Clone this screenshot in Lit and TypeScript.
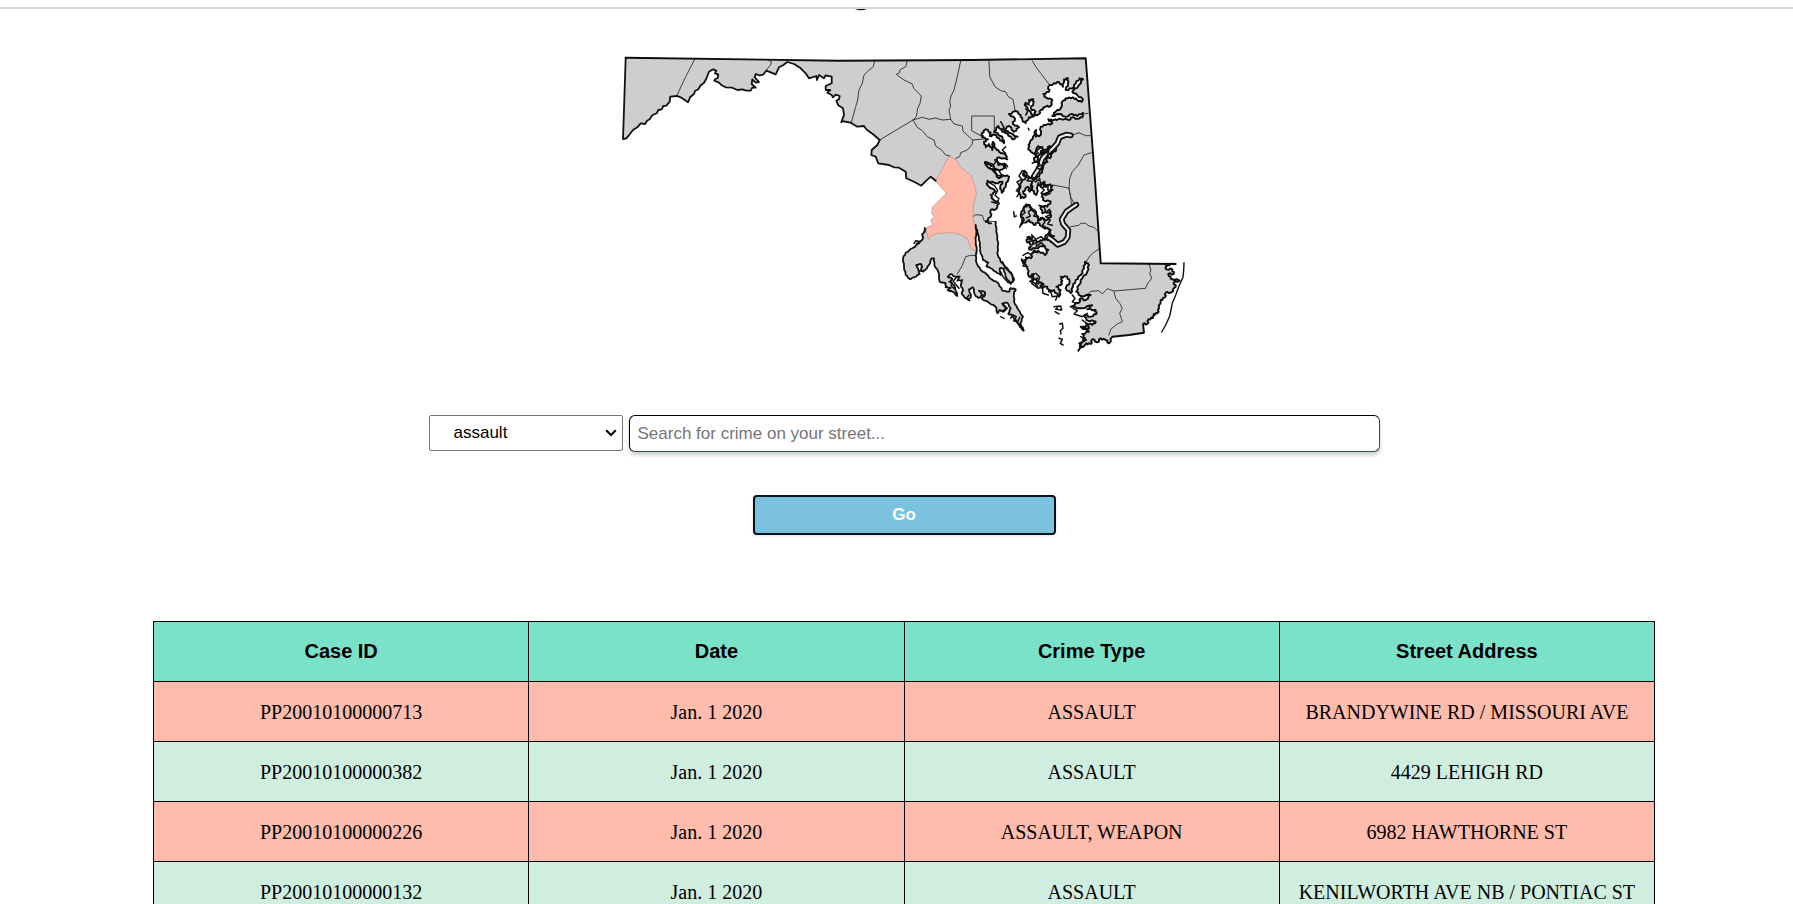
import { LitElement, html, css, svg } from "lit";
import { customElement, property, state } from "lit/decorators.js";

type Point = [number, number];

interface Incident {
  id: string;
  date: string;
  type: string;
  address: string;
}

// Map geometry is surveyed in sheets. Each sheet has its own origin and is
// digitised at three units to one map unit.
const sheet = (ox: number, oy: number) => (points: string): Point[] =>
  points.trim().split(/\s+/).map((pair) => {
    const [x, y] = pair.split(",").map(Number);
    return [ox + x / 3, oy + y / 3];
  });

const west = sheet(610, 40);
const north = sheet(840, 40);
const capital = sheet(860, 120);
const middle = sheet(980, 140);
const south = sheet(880, 200);
const shore = sheet(1000, 180);

const line = (points: Point[]) =>
  "M" + points.map(([x, y]) => `${x.toFixed(1)} ${y.toFixed(1)}`).join("L");

// Breaks short shoreline segments into small inlets; long survey lines stay straight.
const crinkle = (points: Point[], depth = 1.1): Point[] =>
  points.flatMap((p, i): Point[] => {
    const q = points[i + 1];
    if (!q) return [p];
    const dx = q[0] - p[0];
    const dy = q[1] - p[1];
    const length = Math.hypot(dx, dy);
    if (length < 3 || length > 14) return [p];
    const side = (i * 7) % 3 === 0 ? -depth : depth;
    const nx = (-dy / length) * side;
    const ny = (dx / length) * side;
    return [
      p,
      [p[0] + dx * 0.35 + nx, p[1] + dy * 0.35 + ny],
      [p[0] + dx * 0.6 - nx * 0.7, p[1] + dy * 0.6 - ny * 0.7],
    ];
  });

const potomac = [
  ...west(`50,53 42,297 52,295 62,283 72,270 85,262 95,250 108,252 114,242 122,238 130,226 143,220 148,210 158,208
    163,198 172,197 182,185 184,170 205,168 215,172 237,187 243,172 255,162 258,153 268,148 275,136 284,130 292,116
    300,95 312,88 322,92 318,100 328,104 326,114 318,118 316,122 330,128 338,136 350,142 370,143 385,150 400,148
    412,152 425,152 430,143 440,143 428,132 430,118 440,128 450,126 437,112 440,102 452,106 462,104 472,92 500,103
    510,82 522,76 535,66 555,72 575,85 590,100 600,115 622,108 624,120 630,105 645,115 650,106 668,110 668,130
    650,138 650,150 664,150 655,158 668,165 672,172 680,164 692,168 690,178 682,182 688,196 702,205 705,225 697,247`),
  ...north(`8,243 35,248 55,260 75,258 82,268 105,285 122,300 115,315 98,330 97,345 110,350 118,370 150,375 165,382
    180,383 200,395 202,415 225,425 247,437 262,422 275,410 290,422`),
];

const districtLine = capital(`230,183 262,220 220,262 218,280 226,290 215,300 222,315 203,322`);

const southernShore = crinkle(
  south(`137,84 138,95 130,102 132,115 120,130 100,145 80,158 72,175 75,200 80,225 92,237 105,232
  122,222 118,210 112,195 125,192 130,200 124,212 132,215 140,208 150,195 158,175 165,175 166,195 178,215 182,245
  200,250 200,262 215,264 206,270 222,276 235,288 228,262 215,245 220,236 206,230 215,222 228,230 242,230 235,242
  250,240 245,255 252,270 248,280 255,290 268,300 276,290 270,268 282,262 288,285 298,294 312,285 300,272 318,276
  318,285 308,296 330,308 350,320 355,340 362,330 372,335 380,325 370,310 384,308 395,325 388,342 400,345 405,355
  415,365 422,380 434,392 424,370 432,350 415,325 405,305 405,280 410,268 395,264 390,275 370,272 358,250 335,236
  322,222 305,210 293,190 290,165 293,155 290,120 292,100 290,75 296,100 303,130 303,150 312,180 328,188 322,198
  335,205 350,215 365,225 362,205 374,205 380,230 395,252 405,240 400,225 385,205 365,185 355,160 358,130 352,95
  350,65`),
  0.4,
);

const upperBay = crinkle(
  north(`456,550 440,545 455,530 455,510 470,508 480,490 462,478 455,465 470,455 445,435 445,422 470,430
  490,425 484,440 488,458 500,440 510,410 490,405 480,415 465,395 440,375 438,366 452,374 465,380 465,392 490,388
  500,375 485,372 468,360 480,352 505,358 500,345 480,335 470,325 462,305 460,330 450,312 440,322 435,305 447,298
  430,292 428,280 440,268 455,278 452,288 466,284 480,295 495,310 490,290 465,275 478,258 490,275 505,280 520,298
  536,290 510,278 495,268 510,258 525,275 540,262 522,252 528,236 510,222 530,213 545,225 550,240 560,250 570,232
  582,230 575,215 557,195 560,188 570,195 570,180 583,178 583,190 575,205 590,215 585,228 600,222 605,210 620,200
  635,198 640,180 620,172 613,162 630,155 628,140 645,130 660,126 672,140 675,118 687,115 687,130 680,150 700,145
  710,130 722,115 732,118 720,135 700,155 715,165 732,178 728,186 714,180 702,172 685,175 672,182 665,205 650,215
  640,228 660,222 680,230 700,222 715,228 732,218 730,232 715,236 700,232 690,240 660,236 640,242 628,238 640,250
  620,255 605,260 605,285 590,290 592,270 582,290 572,310 568,325 575,335`),
  0.7,
);

const easternShore = [
  ...crinkle(
    [
      ...north(`590,345 585,360 600,372 597,350 588,338 598,318 610,325 605,340 622,328 632,318 630,335 645,320 652,328
    640,340 632,355 620,350 625,365 612,372 610,390 600,410 585,418 570,410 556,392 552,402 560,412 548,425 540,450
    545,475 560,470 552,455 566,440 572,455 580,425 578,450 592,465 598,430 605,440 615,425 618,440 630,434 640,438
    635,455 622,458`),
      ...shore(`130,45 132,60 155,65 145,80 125,78 130,100 155,95 155,112 142,120 130,115 118,118 110,95 95,90 92,75
    75,80 65,105 75,120 65,135 90,120 105,135 115,128 130,140 155,150 150,165 165,168 155,185 140,175 130,182
    115,185 95,178 90,170 82,180 95,195 90,208 110,205 130,198 148,210 138,225 118,212 100,220 96,235 80,232 80,245
    68,238 85,265 90,290 105,282 100,300 115,295 112,310 128,308 125,322 145,320 150,335 165,330 180,350 185,330
    172,320 185,315 190,302 185,290 205,290 212,305 200,325 215,340 222,320 230,300 245,285 255,265 258,245 270,255
    265,275 250,295 240,315 232,335 245,348 275,345 260,360 245,355 240,368 215,380 245,385 280,376 265,388 290,390
    292,402 275,410 258,405 262,420 290,425 280,435 262,430 270,445 245,440 270,455 250,462 258,475 248,488 238,512
    262,490 275,492 280,478 295,487 305,475 320,480 330,490 340,470`),
    ],
    0.8,
  ),
  ...shore(`340,470 390,465 435,458`),
  ...crinkle(
    shore(`432,432 445,432 448,418 462,414 464,402 475,400 480,385 485,360 498,352 500,338 515,338 530,320 524,308
    542,302 515,296 508,282 524,282 520,268 502,268 500,254 530,252`),
    0.8,
  ),
  ...shore(`305,250 288,0`),
  ...north(`740,55 400,60 0,62`),
];

const land = [...potomac, ...districtLine, ...southernShore, ...upperBay, ...easternShore];

const princeGeorges = [
  ...capital(`230,183 270,108 293,120 300,138 335,165 350,205 352,225 343,255 342,290 346,310 350,320`),
  ...south(`292,100 290,120 293,155 275,145 265,115 245,105 220,98 175,100 155,108 148,118 140,84`),
  ...capital(`222,315 215,300 226,290 218,280 220,262 262,220`),
];

const countyLines = [
  west(`257,58 230,110 203,168`),
  west(`478,60 488,66 484,76 470,92`),
  north(`107,62 103,80 88,92 75,105 70,130 60,150 56,180 50,200 37,248`),
  north(`205,62 200,80 182,90 182,98 172,103 195,120 220,132 224,145 247,168 243,190 236,205 232,230 222,240 122,300`),
  north(`222,240 250,232 270,238 290,234 310,240 335,238`),
  north(`365,62 355,110 345,150 336,168 332,185 335,198 330,210 335,238 345,252 370,258 372,274 385,285 400,300 435,297`),
  north(`450,62 452,110 468,140 485,152 500,155 508,170 522,178 528,210`),
  north(`580,62 590,80 605,100 632,135`),
  north(`430,290 398,272 398,228 466,228 466,285`),
  north(`222,240 235,262 250,272 265,290 285,300 290,318 308,330 320,345 333,348`),
  north(`402,300 398,315 385,330 365,338 362,350 350,355`),
  north(`748,220 732,222`),
  north(`695,287 720,278 740,287 755,287`),
  north(`757,338 735,345 718,375 700,395 692,415 690,445 695,475 698,500`),
  north(`640,435 670,440 690,445`),
  capital(`342,290 350,284 370,286 375,302 410,305`),
  south(`235,222 248,200 260,170 275,166 290,167`),
  shore(`210,25 215,50 225,70`),
  shore(`215,140 240,136 245,130 260,130 270,138 285,142 300,157`),
  shore(`300,207 280,220 270,232 262,245`),
  shore(`450,253 456,270 452,280 458,295 445,312 440,325 345,333 325,326 310,342 300,332 275,334 268,342`),
  shore(`345,335 350,355 362,370 370,385 362,400 370,425 355,432 335,448 330,465`),
];

const rivers = [
  shore(`232,74 220,82 202,95 188,118 192,132 208,150 206,172 196,186 176,194 160,180 145,170`),
  north(`695,286 682,284 662,292 655,310 640,326 622,342 610,356 600,385 585,408`),
];

const islets = [
  north(`568,265 570,270`),
  north(`485,245 495,262 488,270`),
  north(`560,205 566,215 560,225`),
  north(`500,320 490,330 500,340`),
  north(`500,372 506,380`),
  north(`590,330 602,345 592,352`),
  south(`105,130 110,122 120,124 112,132`),
  south(`210,245 220,250 216,258 226,266`),
  south(`230,235 222,244 232,255 240,265`),
  south(`270,285 262,296 272,302`),
  south(`365,350 375,355`),
  south(`375,315 385,325 375,335`),
  south(`395,355 402,345 412,350 404,362 416,366 422,352`),
  south(`408,360 420,374 428,382`),
  middle(`175,30 190,20 196,34 184,44 200,40 210,30 204,50`),
  middle(`160,70 176,62 184,76 172,84 190,90 196,70 206,66`),
  middle(`130,92 120,108 128,118 114,126 122,140 112,152 122,158 114,170`),
  middle(`134,98 140,112 152,112 144,122 158,124`),
  middle(`160,118 170,126 182,116 184,130 198,126 192,142 208,134 206,150 222,150`),
  middle(`184,140 196,150 186,160 200,166 214,160`),
  middle(`142,192 132,206 138,218 126,228 130,242 122,262`),
  middle(`142,200 150,194 160,206 148,216 154,228 142,234`),
  middle(`164,208 172,216 164,228 178,232 176,244 188,238`),
  middle(`180,196 196,202 200,216 212,208 214,224 200,230 214,240 206,252 220,256`),
  middle(`190,232 198,246 190,256 204,264 214,272 206,282`),
  middle(`146,290 160,296 158,284 170,298 186,290 196,298 206,290`),
  middle(`150,304 164,302 160,314 174,306 172,320 186,308 198,318`),
  middle(`132,346 146,338 156,344 166,330 176,338`),
  middle(`128,360 138,368 132,378 146,380`),
  middle(`104,215 106,230 112,228`),
  middle(`160,402 164,418 152,424 168,430 176,440`),
  middle(`170,400 182,412 178,424 194,432 190,444`),
  middle(`28,68 44,74 54,60 58,76 76,70 82,86`),
  middle(`30,84 46,92 56,106 70,110 60,92 48,84`),
  middle(`30,128 46,136 56,152 48,166 60,176`),
  middle(`38,186 52,190 58,180`),
  shore(`92,290 104,300 98,310 118,325 130,320 132,340 148,345`),
  shore(`155,335 160,350 175,348 170,360`),
  shore(`165,380 185,378 188,390 170,388 176,382`),
  shore(`168,395 180,402`),
  shore(`182,432 190,430 192,445 184,452 186,462`),
  shore(`180,475 190,478 184,490 192,495`),
  shore(`220,345 228,355 220,365 232,370`),
  shore(`222,385 235,392 225,402 250,410 265,400`),
  shore(`250,420 265,432 255,445 268,450`),
  shore(`245,470 262,480 240,490 252,502`),
  shore(`10,245 20,265 40,285 42,305 28,308 12,290 5,275`),
];

const barrierIsland = shore(`555,248 554,270 552,292 540,318 530,345 520,370 512,408 500,435 488,456`);

@customElement("county-map")
class CountyMap extends LitElement {
  static styles = css`
    :host {
      display: block;
    }
    .map {
      display: block;
      width: 600px;
      max-width: 100%;
      height: auto;
      margin: 0 auto;
      stroke-linejoin: round;
      stroke-linecap: round;
    }
    .land {
      fill: #cecece;
    }
    .selected {
      fill: #ffb9a9;
      stroke: #a77a70;
      stroke-width: 0.5;
    }
    .county {
      fill: none;
      stroke: #3c3c3c;
      stroke-width: 1;
    }
    .coast {
      fill: none;
      stroke: #111;
      stroke-width: 1.8;
    }
    .tidal {
      fill: none;
      stroke: #0c0c0c;
      stroke-width: 1.9;
    }
    .islet {
      fill: none;
      stroke: #111;
      stroke-width: 1.5;
    }
    .bank {
      fill: none;
      stroke: #111;
      stroke-width: 5.8;
    }
    .water {
      fill: none;
      stroke: #ececec;
      stroke-width: 2.2;
    }
    .barrier {
      fill: none;
      stroke: #111;
      stroke-width: 1.4;
    }
  `;

  render() {
    return html`
      <svg class="map" viewBox="605 40 600 320" role="img" aria-label="Maryland counties">
        <path class="land" d=${line(land) + "Z"}></path>
        ${countyLines.map((c) => svg`<path class="county" d=${line(c)}></path>`)}
        <path class="selected" d=${line(princeGeorges) + "Z"}></path>
        <path class="coast" d=${line(potomac)}></path>
        <path class="coast" d=${line(southernShore)}></path>
        <path class="tidal" d=${line([...upperBay, ...easternShore, land[0]])}></path>
        ${rivers.map((r) => svg`<path class="bank" d=${line(r)}></path>`)}
        ${rivers.map((r) => svg`<path class="water" d=${line(r)}></path>`)}
        ${islets.map((i) => svg`<path class="islet" d=${line(i)}></path>`)}
        <path class="barrier" d=${line(barrierIsland)}></path>
      </svg>
    `;
  }
}

@customElement("crime-table")
class CrimeTable extends LitElement {
  @property({ attribute: false }) incidents: Incident[] = [];

  static styles = css`
    :host {
      display: block;
    }
    .table {
      width: 100%;
      table-layout: fixed;
      border-collapse: collapse;
      font: 20px/24px "Liberation Serif", "Times New Roman", serif;
      text-align: center;
      color: #000;
    }
    .head,
    .cell {
      box-sizing: border-box;
      height: 60px;
      padding: 0 8px;
      border: 1px solid #000;
    }
    .head {
      padding-bottom: 2px;
      background: #7be2ca;
      font-family: "Liberation Sans", Arial, sans-serif;
      font-weight: 700;
    }
    .row {
      background: #ffbcac;
    }
    .row:nth-child(even) {
      background: #d0eedf;
    }
  `;

  render() {
    return html`
      <table class="table">
        <thead>
          <tr>
            <th class="head" scope="col">Case ID</th>
            <th class="head" scope="col">Date</th>
            <th class="head" scope="col">Crime Type</th>
            <th class="head" scope="col">Street Address</th>
          </tr>
        </thead>
        <tbody>
          ${this.incidents.map(
            (i) => html`<tr class="row">
              <td class="cell">${i.id}</td>
              <td class="cell">${i.date}</td>
              <td class="cell">${i.type}</td>
              <td class="cell">${i.address}</td>
            </tr>`,
          )}
        </tbody>
      </table>
    `;
  }
}

@customElement("app-root")
class AppRoot extends LitElement {
  @state() private incidents: Incident[] = [
    { id: "PP20010100000713", date: "Jan. 1 2020", type: "ASSAULT", address: "BRANDYWINE RD / MISSOURI AVE" },
    { id: "PP20010100000382", date: "Jan. 1 2020", type: "ASSAULT", address: "4429 LEHIGH RD" },
    { id: "PP20010100000226", date: "Jan. 1 2020", type: "ASSAULT, WEAPON", address: "6982 HAWTHORNE ST" },
    { id: "PP20010100000132", date: "Jan. 1 2020", type: "ASSAULT", address: "KENILWORTH AVE NB / PONTIAC ST" },
  ];

  static styles = css`
    :host {
      display: block;
      height: 100vh;
      overflow: hidden;
      background: #fff;
      font-family: "Liberation Sans", Arial, sans-serif;
    }
    .topbar {
      height: 7px;
      border-bottom: 2px solid #d9d9d9;
    }
    .page {
      padding: 0 138px 0 153px;
    }
    .tail {
      display: block;
      width: 100px;
      height: 3px;
      margin: 0 auto 28px;
    }
    .search {
      display: flex;
      flex-wrap: wrap;
      justify-content: center;
      align-items: flex-start;
      row-gap: 43px;
      margin: 55px 0 86px;
    }
    .fields {
      display: flex;
      justify-content: center;
      gap: 6px;
      width: 100%;
    }
    .kind,
    .street,
    .go {
      box-sizing: border-box;
      margin: 0;
      font: 17px/20px "Liberation Sans", Arial, sans-serif;
    }
    .kind {
      appearance: none;
      width: 194px;
      height: 36px;
      padding: 0 24px;
      border: 1px solid #767676;
      border-radius: 2px;
      background: #fff
        url("data:image/svg+xml,%3Csvg xmlns='http://www.w3.org/2000/svg' width='12' height='8'%3E%3Cpath d='M1.2 1.2 6 6l4.800-4.800' fill='none' stroke='%23000' stroke-width='2'/%3E%3C/svg%3E")
        no-repeat right 5px center;
      color: #000;
    }
    .street {
      width: 50%;
      height: 37px;
      padding: 0 8px;
      border: 1px solid #2f4f4f;
      border-top-color: #000;
      border-left-color: #000;
      border-radius: 6px;
      box-shadow: 0 3px 4px rgba(0, 0, 0, 0.2);
      color: #000;
    }
    .street::placeholder {
      color: #757575;
    }
    .go {
      width: 303px;
      height: 40px;
      padding: 0;
      border: 2px solid #04141c;
      border-radius: 4px;
      background: #7ac2e0;
      box-shadow: 0 1px 3px rgba(0, 0, 0, 0.12);
      color: #fff;
      font-weight: 700;
    }
  `;

  render() {
    return html`
      <div class="topbar"></div>
      <main class="page">
        <svg class="tail" viewBox="0 0 100 3" aria-hidden="true">
          <path d="M1 0H13Q10 1.300 7 1.300T1 0Z" fill="#111"></path>
        </svg>
        <county-map></county-map>
        <form class="search" @submit=${(e: Event) => e.preventDefault()}>
          <div class="fields">
            <select class="kind" aria-label="Crime type">
              <option selected>assault</option>
            </select>
            <input class="street" type="text" aria-label="Street" placeholder="Search for crime on your street..." />
          </div>
          <button class="go" type="submit">Go</button>
        </form>
        <crime-table .incidents=${this.incidents}></crime-table>
      </main>
    `;
  }
}
